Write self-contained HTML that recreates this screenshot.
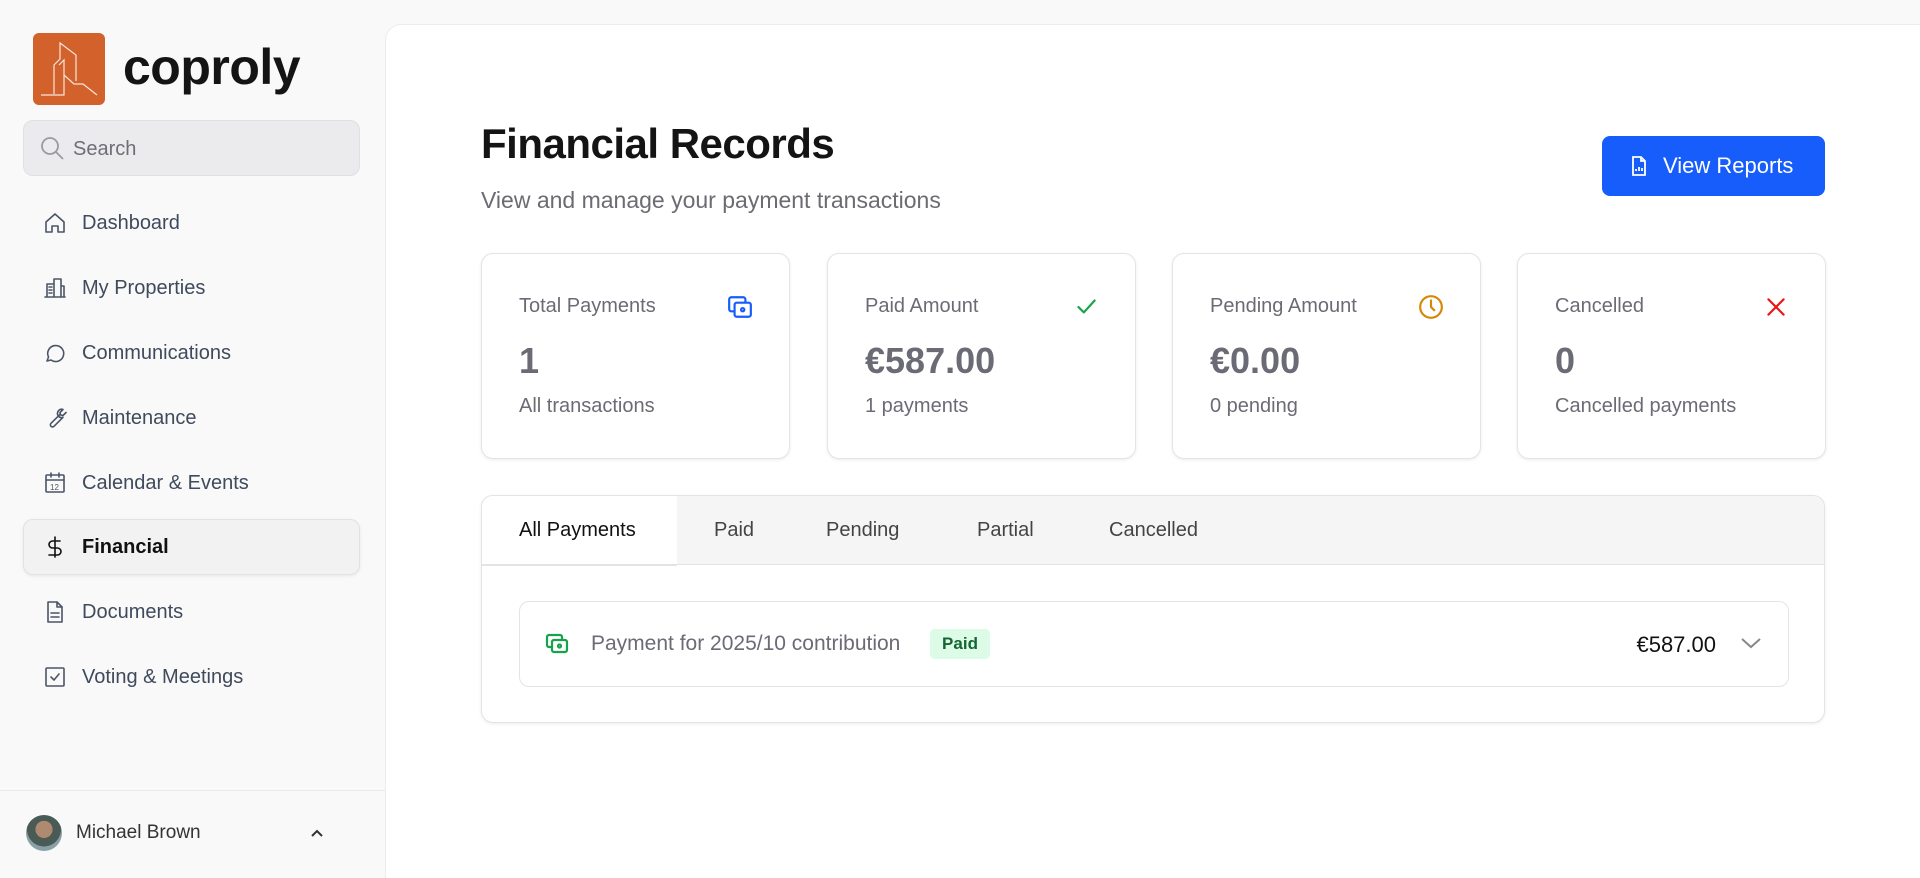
<!DOCTYPE html>
<html><head><meta charset="utf-8"><style>
*{box-sizing:border-box;margin:0;padding:0}
html,body{width:1920px;height:878px;overflow:hidden}
body{background:#f9f9f9;font-family:"Liberation Sans",sans-serif;position:relative}
.a{position:absolute}
.nav{position:absolute;left:23px;width:337px;height:56px;display:flex;align-items:center;font-size:20px;color:#3f4a5c}
.nav svg{position:absolute;left:20px;width:24px;height:24px;fill:none;stroke:#4a5568;stroke-width:1.6;stroke-linecap:round;stroke-linejoin:round}
.nav span{position:absolute;left:59px}
.card{position:absolute;top:253px;width:309px;height:206px;background:#fff;border:1px solid #e4e4e7;border-radius:12px;box-shadow:0 1px 3px rgba(0,0,0,.08)}
.card .l{position:absolute;left:37px;top:41px;font-size:20px;color:#6b6b75}
.card .v{position:absolute;left:37px;top:86px;font-size:36px;font-weight:bold;color:#6b6b75}
.card .s{position:absolute;left:37px;top:141px;font-size:20px;color:#6b6b75}
.card svg{position:absolute;right:36px;top:40px;width:26px;height:26px;fill:none;stroke-width:2;stroke-linecap:round;stroke-linejoin:round}
.tab{position:absolute;top:0;height:68px;line-height:68px;font-size:20px;color:#444}
</style></head><body>
<div class="a" style="left:33px;top:33px;width:72px;height:72px;background:#d2612b;border-radius:6px">
<svg width="72" height="72" viewBox="0 0 72 72" fill="none" stroke="#f6e6dc" stroke-width="1.2"><path d="M8 62H31V42L41 51H50L64 62M31 42V27L26 32M21 61V32L27 26V10L43 22V48"/></svg></div>
<div class="a" style="left:123px;top:38px;font-size:50px;font-weight:bold;color:#141414;letter-spacing:-.5px">coproly</div>
<div class="a" style="left:23px;top:120px;width:337px;height:56px;background:#ebebed;border:1px solid #e0e0e3;border-radius:10px">
<svg class="a" style="left:15px;top:14px" width="26" height="26" viewBox="0 0 26 26" fill="none" stroke="#9a9aa2" stroke-width="1.8"><circle cx="11" cy="11" r="8"/><path d="M17 17l7 7"/></svg>
<span class="a" style="left:49px;top:17px;font-size:20px;color:#6e6e78">Search</span></div>

<div class="nav" style="top:195px"><svg viewBox="0 0 24 24"><path d="M3 11L12 3l9 8v10h-6v-6H9v6H3z"/></svg><span>Dashboard</span></div>
<div class="nav" style="top:260px"><svg viewBox="0 0 24 24"><path d="M2 21h20M4 21V8h7v13M11 21V3h7v18M18 10h3v11M6 11h1M8 11h1M6 14h1M8 14h1M6 17h1M8 17h1"/></svg><span>My Properties</span></div>
<div class="nav" style="top:325px"><svg viewBox="0 0 24 24"><path d="M4 20l1.5-4A8 8 0 1 1 8 19z"/></svg><span>Communications</span></div>
<div class="nav" style="top:390px"><svg viewBox="0 0 24 24"><path d="M14.7 6.3a4 4 0 0 0 5.3 5L11 20.3a2 2 0 0 1-3-3L17 8.4"/><path d="M14.7 6.3A4 4 0 0 1 20 3.5l-3 3 .5 2.5 2.5.5 3-3"/></svg><span>Maintenance</span></div>
<div class="nav" style="top:455px"><svg viewBox="0 0 24 24"><rect x="3" y="4" width="18" height="17" rx="1"/><path d="M3 9h18M8 2v4M16 2v4"/><text x="7" y="19" font-size="8" fill="#4a5568" stroke="none">12</text></svg><span>Calendar &amp; Events</span></div>
<div class="a" style="left:23px;top:519px;width:337px;height:56px;background:#f2f2f3;border:1px solid #e2e2e5;border-radius:10px;box-shadow:0 1px 3px rgba(0,0,0,.08)"></div>
<div class="nav" style="top:519px;color:#111;font-weight:bold"><svg viewBox="0 0 24 24" style="stroke:#111"><path d="M12 2v20M17 6H9.5a3.5 3.5 0 0 0 0 7h5a3.5 3.5 0 0 1 0 7H6"/></svg><span>Financial</span></div>
<div class="nav" style="top:584px"><svg viewBox="0 0 24 24"><path d="M14 2H5v20h14V7z"/><path d="M14 2v5h5M8 13h8M8 17h8"/></svg><span>Documents</span></div>
<div class="nav" style="top:649px"><svg viewBox="0 0 24 24"><rect x="3" y="3" width="18" height="18" rx="1"/><path d="M8 12l3 3 5-6"/></svg><span>Voting &amp; Meetings</span></div>

<div class="a" style="left:0;top:790px;width:385px;border-top:1px solid #eaeaea"></div>
<div class="a" style="left:26px;top:815px;width:36px;height:36px;border-radius:50%;background:radial-gradient(circle at 50% 40%,#b08a70 0 30%,#4a5a55 31% 60%,#8aa0a8 61%)"></div>
<div class="a" style="left:76px;top:822px;font-size:19px;color:#333">Michael Brown</div>
<svg class="a" style="left:309px;top:825px" width="16" height="16" viewBox="0 0 16 16" fill="none" stroke="#333" stroke-width="2"><path d="M3 11l5-5 5 5"/></svg>

<div class="a" style="left:385px;top:24px;width:1560px;height:854px;background:#fff;border:1px solid #ececec;border-bottom:none;border-radius:16px 0 0 0"></div>
<div class="a" style="left:481px;top:120px;font-size:42px;font-weight:bold;color:#141414;letter-spacing:-.5px">Financial Records</div>
<div class="a" style="left:481px;top:187px;font-size:23px;color:#6b6b72">View and manage your payment transactions</div>
<div class="a" style="left:1602px;top:136px;width:223px;height:60px;background:#165dfc;border-radius:8px;color:#fff;font-size:22px">
<svg class="a" style="left:28px;top:20px" width="18" height="20" viewBox="0 0 18 20" fill="none" stroke="#fff" stroke-width="1.8"><path d="M11 1H3v18h12V5z M11 1v4h4M6 15v-2M9 15v-4M12 15v-3"/></svg>
<span class="a" style="left:61px;top:17px">View Reports</span></div>

<div class="card" style="left:481px"><div class="l">Total Payments</div><svg viewBox="0 0 24 24" stroke="#165dfc"><rect x="2" y="3" width="15" height="13" rx="2"/><rect x="7" y="8" width="15" height="13" rx="2" fill="#fff"/><circle cx="14.5" cy="14.5" r="1.5"/></svg><div class="v">1</div><div class="s">All transactions</div></div>
<div class="card" style="left:827px"><div class="l">Paid Amount</div><svg viewBox="0 0 24 24" stroke="#16a34a"><path d="M5 12l5 5 10-11"/></svg><div class="v">€587.00</div><div class="s">1 payments</div></div>
<div class="card" style="left:1172px"><div class="l">Pending Amount</div><svg viewBox="0 0 24 24" stroke="#d48806"><circle cx="12" cy="12" r="10"/><path d="M12 6v6l3 3"/></svg><div class="v">€0.00</div><div class="s">0 pending</div></div>
<div class="card" style="left:1517px"><div class="l">Cancelled</div><svg viewBox="0 0 24 24" stroke="#e11" ><path d="M5 5l14 14M19 5L5 19"/></svg><div class="v">0</div><div class="s">Cancelled payments</div></div>

<div class="a" style="left:481px;top:495px;width:1344px;height:228px;background:#fff;border:1px solid #e4e4e7;border-radius:12px;box-shadow:0 1px 3px rgba(0,0,0,.08);overflow:hidden">
<div class="a" style="left:0;top:0;width:1344px;height:69px;background:#f5f5f5;border-bottom:1px solid #e4e4e7"></div>
<div class="a" style="left:0;top:0;width:195px;height:70px;background:#fff;border-bottom:2px solid #e4e4e7"></div>
<div class="tab" style="left:37px;color:#111;font-weight:500">All Payments</div>
<div class="tab" style="left:232px">Paid</div>
<div class="tab" style="left:344px">Pending</div>
<div class="tab" style="left:495px">Partial</div>
<div class="tab" style="left:627px">Cancelled</div>
<div class="a" style="left:37px;top:105px;width:1270px;height:86px;border:1px solid #e4e4e7;border-radius:10px">
<svg class="a" style="left:24px;top:30px" width="26" height="24" viewBox="0 0 24 24" fill="none" stroke="#16a34a" stroke-width="2.2"><rect x="2" y="3" width="15" height="12" rx="2"/><rect x="7" y="8" width="15" height="12" rx="2" fill="#fff"/><circle cx="14.5" cy="14" r="1.5"/></svg>
<span class="a" style="left:71px;top:30px;font-size:21px;color:#6b6b75">Payment for 2025/10 contribution</span>
<span class="a" style="left:410px;top:27px;width:60px;height:30px;background:#dcfce7;border-radius:5px;color:#166534;font-size:17px;font-weight:bold;text-align:center;line-height:30px">Paid</span>
<span class="a" style="right:72px;top:30px;font-size:22px;color:#111">€587.00</span>
<svg class="a" style="right:26px;top:33px" width="22" height="16" viewBox="0 0 22 16" fill="none" stroke="#888" stroke-width="2"><path d="M2 4l9 8 9-8"/></svg>
</div></div>
</body></html>
